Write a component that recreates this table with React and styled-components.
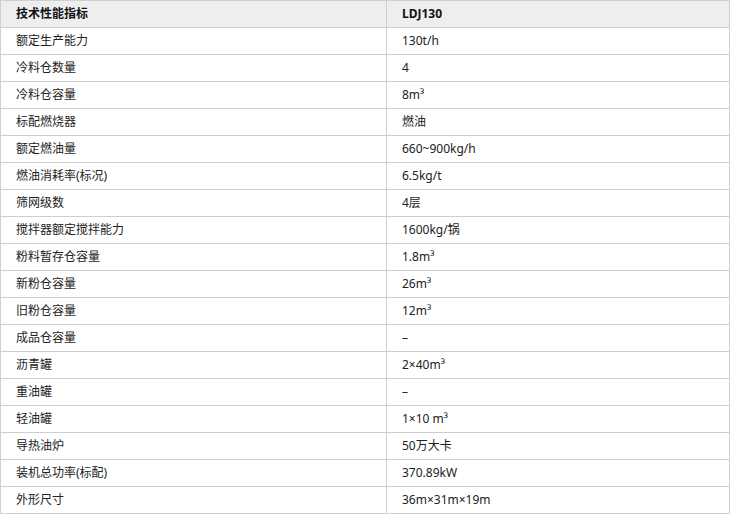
import React from "react";
import styled, { createGlobalStyle } from "styled-components";

const Global = createGlobalStyle`
  html, body { margin: 0; padding: 0; background: #fff; }
  body { font-family: "Noto Sans", "Noto Sans CJK SC", sans-serif; }
`;

const Table = styled.table`
  border-collapse: collapse;
  width: 729px;
  table-layout: fixed;
  font-size: 12px;
  color: #222;
`;

const Row = styled.tr`
  height: 27px;
  background: ${(p) => (p.$head ? "#eeeeee" : "#fff")};
`;

const Cell = styled.td`
  border: 1px solid #cfcfcf;
  padding: 0 15px;
  height: 26px;
  box-sizing: border-box;
  vertical-align: middle;
  line-height: 16px;
  font-weight: ${(p) => (p.$head ? 700 : 400)};
  color: ${(p) => (p.$head ? "#111" : "#222")};
  white-space: nowrap;
`;

const rows = [
  ["额定生产能力", "130t/h"],
  ["冷料仓数量", "4"],
  ["冷料仓容量", "8m³"],
  ["标配燃烧器", "燃油"],
  ["额定燃油量", "660~900kg/h"],
  ["燃油消耗率(标况)", "6.5kg/t"],
  ["筛网级数", "4层"],
  ["搅拌器额定搅拌能力", "1600kg/锅"],
  ["粉料暂存仓容量", "1.8m³"],
  ["新粉仓容量", "26m³"],
  ["旧粉仓容量", "12m³"],
  ["成品仓容量", "–"],
  ["沥青罐", "2×40m³"],
  ["重油罐", "–"],
  ["轻油罐", "1×10 m³"],
  ["导热油炉", "50万大卡"],
  ["装机总功率(标配)", "370.89kW"],
  ["外形尺寸", "36m×31m×19m"],
];

export default function App() {
  return (
    <>
      <Global />
      <Table>
        <colgroup>
          <col style={{ width: "386px" }} />
          <col style={{ width: "343px" }} />
        </colgroup>
        <tbody>
          <Row $head>
            <Cell $head>技术性能指标</Cell>
            <Cell $head>LDJ130</Cell>
          </Row>
          {rows.map(([k, v]) => (
            <Row key={k}>
              <Cell>{k}</Cell>
              <Cell>{v}</Cell>
            </Row>
          ))}
        </tbody>
      </Table>
    </>
  );
}
